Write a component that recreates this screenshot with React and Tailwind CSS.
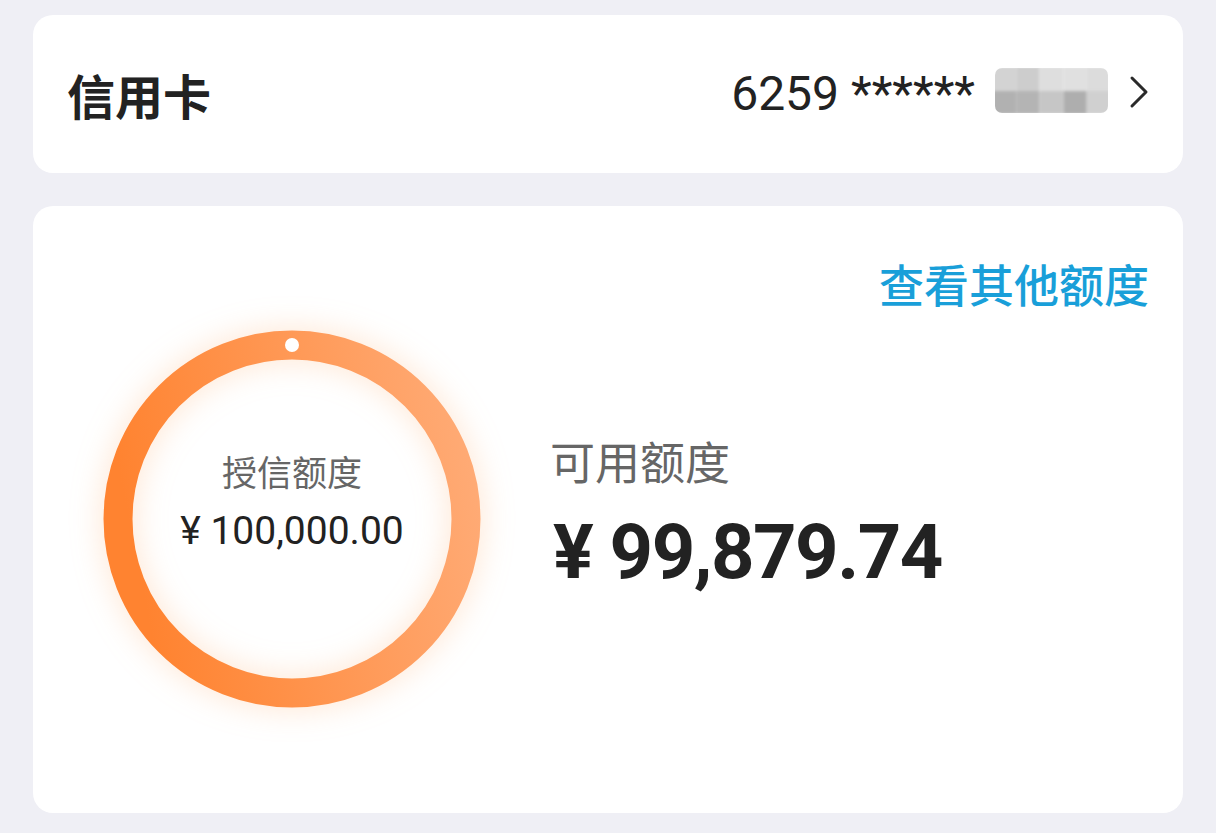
const CJK = '"Noto Sans CJK SC", "Noto Sans", sans-serif';
const NUM = 'Roboto, "Noto Sans CJK SC", sans-serif';

const MOSAIC = [
  ['#d3d3d3', '#cdcdcd', '#dedede', '#e0e0e0', '#dcdcdc'],
  ['#b1b1b1', '#b4b4b4', '#c6c6c6', '#aeaeae', '#d0d0d0'],
];

function MaskedTail() {
  return (
    <div className="w-[113px] h-[45px] rounded-[7px] overflow-hidden">
      <div className="grid grid-cols-5 grid-rows-2 w-full h-full blur-[1.5px] scale-105">
        {MOSAIC.flat().map((c, i) => (
          <div key={i} style={{ backgroundColor: c }} />
        ))}
      </div>
    </div>
  );
}

function Ring() {
  return (
    <div className="relative w-[380px] h-[380px] shrink-0">
      <svg
        width="380"
        height="380"
        viewBox="0 0 380 380"
        className="drop-shadow-[0_0_16px_rgba(255,165,95,0.3)]"
      >
        <defs>
          <linearGradient id="ringGrad" x1="0" y1="0.35" x2="1" y2="0.15">
            <stop offset="0" stopColor="#ff8330" />
            <stop offset="1" stopColor="#ffab76" />
          </linearGradient>
        </defs>
        <circle cx="190" cy="190" r="174" fill="none" stroke="url(#ringGrad)" strokeWidth="29" />
        <circle cx="190" cy="16" r="7" fill="#ffffff" />
      </svg>
      <div className="absolute inset-0 flex flex-col items-center justify-center pb-[34px]">
        <span className="text-[35px] leading-[1.2] text-[#666666]" style={{ fontFamily: CJK }}>
          授信额度
        </span>
        <span className="mt-[16px] text-[39px] leading-[1.2] text-[#222222]" style={{ fontFamily: NUM }}>
          ¥ 100,000.00
        </span>
      </div>
    </div>
  );
}

export default function App() {
  return (
    <div className="w-[1216px] h-[833px] bg-[#efeff5] overflow-hidden pt-[15px] px-[33px]">
      {/* card header */}
      <div className="h-[158px] bg-white rounded-[20px] flex items-center justify-between pl-[34px] pr-[34px]">
        <h1 className="text-[48px] font-bold text-[#222222] leading-none" style={{ fontFamily: CJK }}>
          信用卡
        </h1>
        <div className="flex items-center">
          <span className="text-[48px] text-[#222222] leading-none" style={{ fontFamily: NUM }}>
            6259 ******
          </span>
          <div className="ml-[20px] mb-[7px]">
            <MaskedTail />
          </div>
          <svg width="20" height="34" viewBox="0 0 20 34" className="ml-[21px] mb-[4px]">
            <path d="M3 3 L17 17 L3 31" fill="none" stroke="#2a2a2a" strokeWidth="3" strokeLinecap="round" strokeLinejoin="round" />
          </svg>
        </div>
      </div>

      {/* limit card */}
      <div className="mt-[33px] h-[607px] bg-white rounded-[20px] pt-[51px] pr-[34px] pl-[69px]">
        <div className="flex justify-end">
          <span className="text-[45px] leading-[1.2] font-medium text-[#199fd9]" style={{ fontFamily: CJK }}>
            查看其他额度
          </span>
        </div>
        <div className="mt-[18px] flex items-center">
          <Ring />
          <div className="ml-[71px] mb-[10px] flex flex-col">
            <span className="text-[45px] leading-[1.2] text-[#666666] -ml-[3px]" style={{ fontFamily: CJK }}>
              可用额度
            </span>
            <span
              className="mt-[23px] text-[76px] leading-[1.1] font-bold text-[#222222] tracking-[-0.02em]"
              style={{ fontFamily: NUM }}
            >
              ¥ 99,879.74
            </span>
          </div>
        </div>
      </div>
    </div>
  );
}
